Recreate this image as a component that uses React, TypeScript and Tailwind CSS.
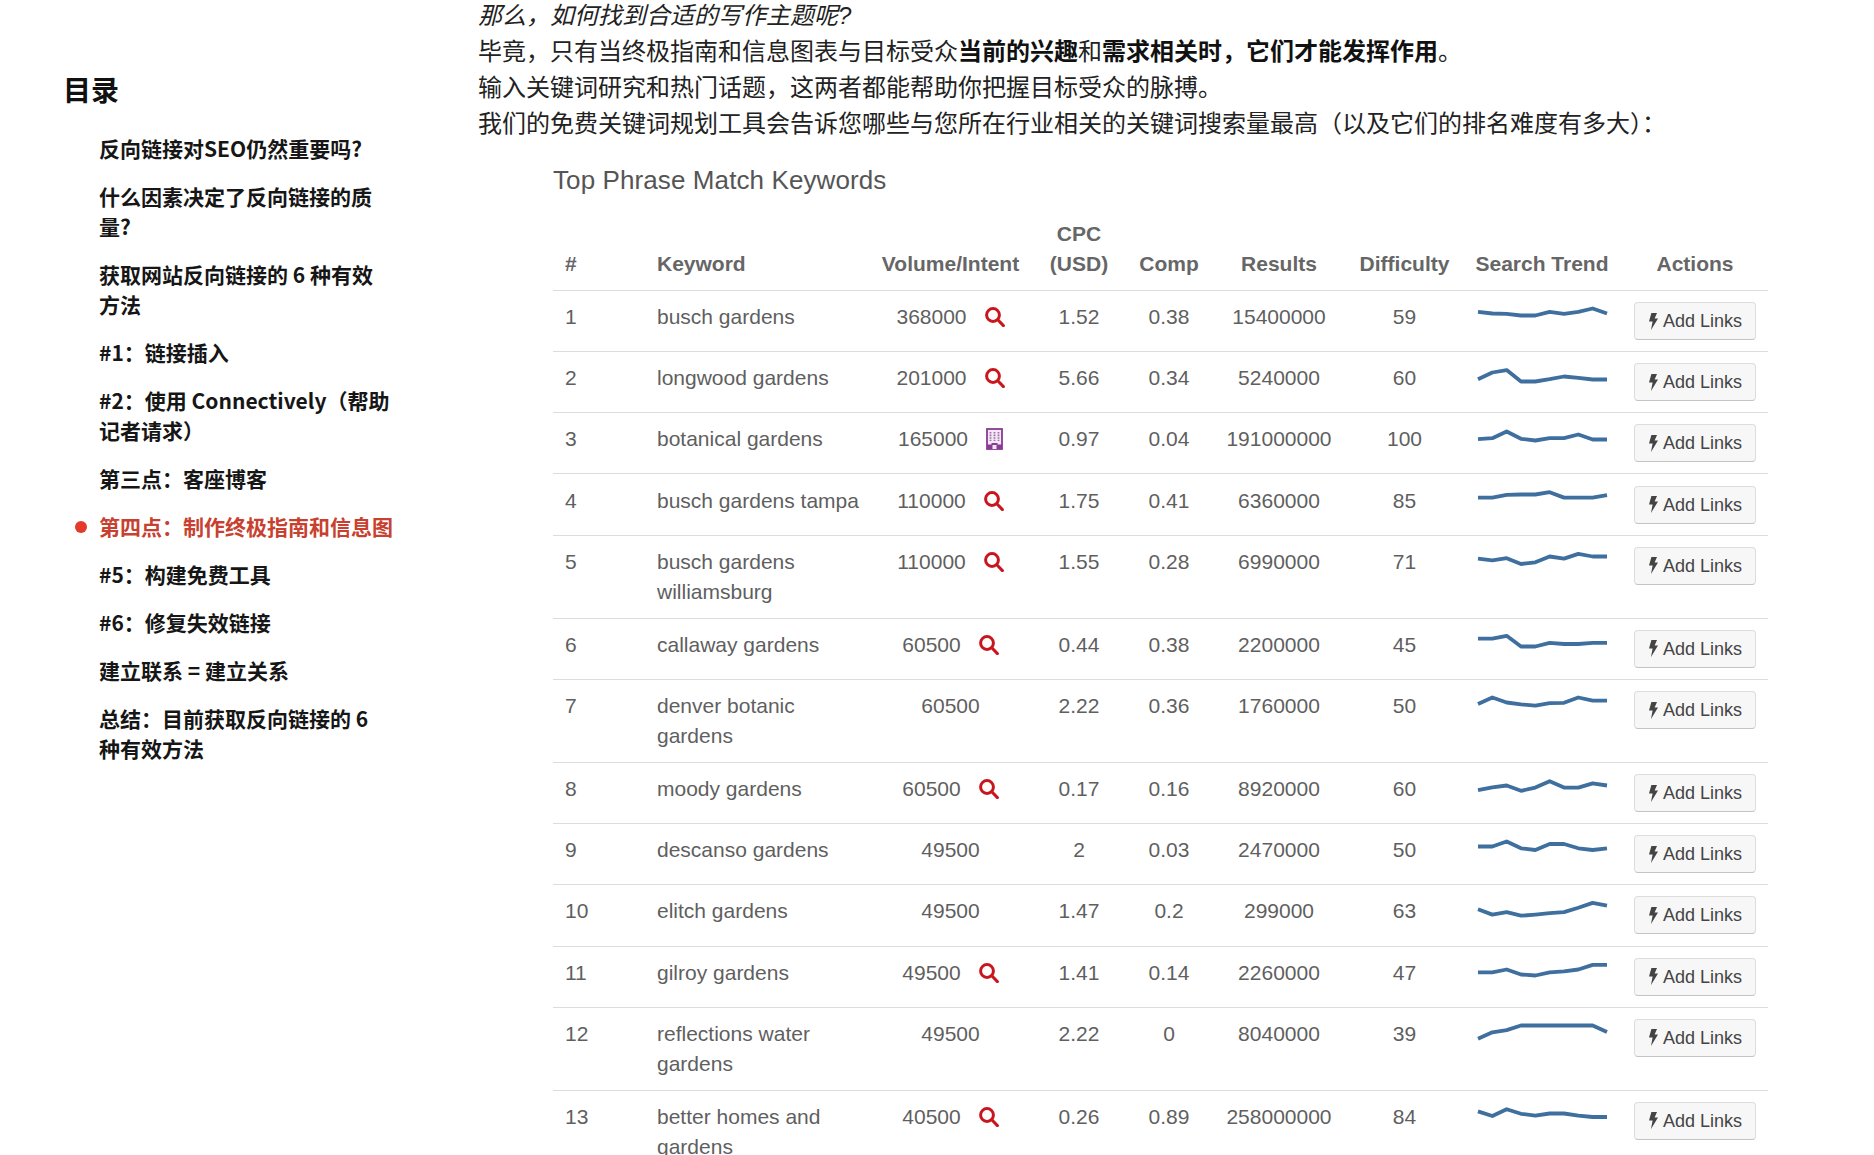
import React from 'react';

const tocItems = [
	'反向链接对SEO仍然重要吗?',
	'什么因素决定了反向链接的质量?',
	'获取网站反向链接的 6 种有效方法',
	'#1：链接插入',
	'#2：使用 Connectively（帮助记者请求）',
	'第三点：客座博客',
	'第四点：制作终极指南和信息图',
	'#5：构建免费工具',
	'#6：修复失效链接',
	'建立联系 = 建立关系',
	'总结：目前获取反向链接的 6 种有效方法',
];

type Intent = 'search' | 'building' | null;

const keywords: {
	keyword: string;
	volume: string;
	intent: Intent;
	cpc: string;
	comp: string;
	results: string;
	difficulty: string;
	trend: number[];
}[] = [
	{ keyword: 'busch gardens', volume: '368000', intent: 'search', cpc: '1.52', comp: '0.38', results: '15400000', difficulty: '59', trend: [9.8, 11.5, 11.8, 13.5, 13.5, 9.8, 11.8, 9.8, 6.5, 11.5] },
	{ keyword: 'longwood gardens', volume: '201000', intent: 'search', cpc: '5.66', comp: '0.34', results: '5240000', difficulty: '60', trend: [16.2, 9.5, 7.1, 18.5, 18.5, 16.2, 13.5, 14.8, 16.5, 16.5] },
	{ keyword: 'botanical gardens', volume: '165000', intent: 'building', cpc: '0.97', comp: '0.04', results: '191000000', difficulty: '100', trend: [15.2, 14.2, 7.5, 14.8, 16.5, 14.2, 14.2, 10.5, 15.5, 15.5] },
	{ keyword: 'busch gardens tampa', volume: '110000', intent: 'search', cpc: '1.75', comp: '0.41', results: '6360000', difficulty: '85', trend: [11.6, 11.6, 8.9, 8.5, 8.5, 6.2, 11.6, 11.6, 11.6, 9.2] },
	{ keyword: 'busch gardens williamsburg', volume: '110000', intent: 'search', cpc: '1.55', comp: '0.28', results: '6990000', difficulty: '71', trend: [11.6, 13.3, 11.2, 17, 15.3, 9.5, 11.6, 6.9, 9.5, 9.5] },
	{ keyword: 'callaway gardens', volume: '60500', intent: 'search', cpc: '0.44', comp: '0.38', results: '2200000', difficulty: '45', trend: [8.6, 8.6, 5.8, 16.5, 16.5, 12.9, 14, 14, 12.9, 12.9] },
	{ keyword: 'denver botanic gardens', volume: '60500', intent: null, cpc: '2.22', comp: '0.36', results: '1760000', difficulty: '50', trend: [12.9, 6.5, 11.5, 13.3, 14.7, 12.2, 11.8, 6.5, 9.7, 9.7] },
	{ keyword: 'moody gardens', volume: '60500', intent: 'search', cpc: '0.17', comp: '0.16', results: '8920000', difficulty: '60', trend: [16.1, 13.3, 11.5, 16.8, 13.6, 7.2, 13.6, 13.6, 9.4, 11.5] },
	{ keyword: 'descanso gardens', volume: '49500', intent: null, cpc: '2', comp: '0.03', results: '2470000', difficulty: '50', trend: [11.5, 11.5, 6.5, 13.3, 15, 9, 9, 13.3, 15, 13.3] },
	{ keyword: 'elitch gardens', volume: '49500', intent: null, cpc: '1.47', comp: '0.2', results: '299000', difficulty: '63', trend: [13.3, 18.6, 16.1, 19.7, 18.6, 17.2, 16.1, 11.8, 6.9, 9.7] },
	{ keyword: 'gilroy gardens', volume: '49500', intent: 'search', cpc: '1.41', comp: '0.14', results: '2260000', difficulty: '47', trend: [14.3, 14.3, 11.5, 16.5, 17.5, 14.3, 13.3, 11.5, 6.9, 6.9] },
	{ keyword: 'reflections water gardens', volume: '49500', intent: null, cpc: '2.22', comp: '0', results: '8040000', difficulty: '39', trend: [19.7, 13.3, 11.1, 6.5, 6.5, 6.5, 6.5, 6.5, 6.5, 12.9] },
	{ keyword: 'better homes and gardens', volume: '40500', intent: 'search', cpc: '0.26', comp: '0.89', results: '258000000', difficulty: '84', trend: [9.4, 14, 7.2, 11.8, 13.6, 11.5, 11.5, 13.6, 15, 15] },
];

function SearchIcon() {
	return (
		<svg width="20" height="20" viewBox="0 0 20 20" fill="none" className="mt-[5px] shrink-0">
			<circle cx="8" cy="8" r="6.4" stroke="#c9161d" strokeWidth="3" />
			<path d="M12.8 12.8 18.4 18.6" stroke="#c9161d" strokeWidth="3" strokeLinecap="round" />
		</svg>
	);
}

function BuildingIcon() {
	return (
		<svg width="17" height="22" viewBox="0 0 17 22" className="mt-[4px] shrink-0">
			<rect x="1" y="1" width="15" height="20" fill="#f3e9f5" stroke="#8a3a94" strokeWidth="1.8" />
			<path d="M4.5 4v9M8.5 4v9M12.5 4v9" stroke="#a66cae" strokeWidth="1.8" strokeDasharray="1.6 1" />
			<path d="M1 16.5h4.5v-1.5h6v1.5H16V21H1z" fill="#8a3a94" />
			<rect x="6.5" y="17" width="4" height="4" fill="#f3e9f5" />
		</svg>
	);
}

function BoltIcon() {
	return (
		<svg width="10" height="17" viewBox="0 0 10 17" className="shrink-0">
			<path d="M3.4 0H9L6.6 5.6H10L3 17l1.6-8.4H1z" fill="#444" />
		</svg>
	);
}

function Sparkline({ points }: { points: number[] }) {
	const line = points.map((y, i) => `${(i * 129) / 9 + 1},${y}`).join(' ');
	return (
		<svg width="131" height="30" viewBox="0 0 131 30" className="block mx-auto">
			<polyline points={line} fill="none" stroke="#3f6f9e" strokeWidth="3.8" strokeLinejoin="round" />
		</svg>
	);
}

export default function App() {
	return (
		<div className="h-[1155px] overflow-hidden bg-white flex font-['Liberation_Sans','Noto_Sans_CJK_SC',sans-serif]">
			<aside className="w-[478px] shrink-0 pl-[63px] pt-[69px] font-['Noto_Sans_CJK_SC',sans-serif]">
				<h2 className="text-[28px] leading-[40px] font-bold text-[#111]">目录</h2>
				<ul className="mt-[24px] ml-[36px] w-[294.5px] flex flex-col gap-[18px]">
					{tocItems.map((item, i) => (
						<li
							key={item}
							className={`relative text-[21px] leading-[30px] font-bold ${i === 6 ? 'text-[#c8402f]' : 'text-[#161616]'}`}
						>
							{i === 6 && <span className="absolute left-[-24px] top-[10px] w-[12px] h-[12px] rounded-full bg-[#e33a2c]" />}
							{item}
						</li>
					))}
				</ul>
			</aside>

			<main className="w-[1290px] -mt-[2px]">
				<div className="text-[24px] leading-[36px] text-[#222]">
					<p className="italic">那么，如何找到合适的写作主题呢?</p>
					<p>
						毕竟，只有当终极指南和信息图表与目标受众<b className="text-[#111]">当前的兴趣</b>和<b className="text-[#111]">需求相关时，它们才能发挥作用</b>。
					</p>
					<p>输入关键词研究和热门话题，这两者都能帮助你把握目标受众的脉搏。</p>
					<p>我们的免费关键词规划工具会告诉您哪些与您所在行业相关的关键词搜索量最高（以及它们的排名难度有多大）：</p>
				</div>

				<div className="ml-[75px] w-[1215px]">
					<h3 className="mt-[20px] text-[26px] leading-[36px] tracking-[0.1px] text-[#555]">Top Phrase Match Keywords</h3>
					<table className="mt-[9px] w-full table-fixed border-collapse text-[21px] leading-[30px] text-[#5f5f5f]">
						<colgroup>
							<col className="w-[91px]" />
							<col className="w-[226px]" />
							<col className="w-[161px]" />
							<col className="w-[96px]" />
							<col className="w-[84px]" />
							<col className="w-[136px]" />
							<col className="w-[115px]" />
							<col className="w-[160px]" />
							<col className="w-[146px]" />
						</colgroup>
						<thead>
							<tr className="align-bottom text-[#666] font-bold">
								<th className="pt-[12px] pb-[11px] px-[12px] text-left">#</th>
								<th className="pt-[12px] pb-[11px] pr-[12px] pl-[13px] text-left">Keyword</th>
								<th className="pt-[12px] pb-[11px] text-center">Volume/Intent</th>
								<th className="pt-[12px] pb-[11px] text-center">
									CPC
									<br />
									(USD)
								</th>
								<th className="pt-[12px] pb-[11px] text-center">Comp</th>
								<th className="pt-[12px] pb-[11px] text-center">Results</th>
								<th className="pt-[12px] pb-[11px] text-center">Difficulty</th>
								<th className="pt-[12px] pb-[11px] text-center">Search Trend</th>
								<th className="pt-[12px] pb-[11px] text-center">Actions</th>
							</tr>
						</thead>
						<tbody>
							{keywords.map((row, i) => (
								<tr key={row.keyword} className="align-top border-t border-[#dcdcdc]">
									<td className="py-[11.08px] pl-[12px]">{i + 1}</td>
									<td className="py-[11.08px] pl-[13px] pr-[11px]">{row.keyword}</td>
									<td className="py-[11.08px]">
										<div className="flex justify-center gap-[18px]">
											<span>{row.volume}</span>
											{row.intent === 'search' && <SearchIcon />}
											{row.intent === 'building' && <BuildingIcon />}
										</div>
									</td>
									<td className="py-[11.08px] text-center">{row.cpc}</td>
									<td className="py-[11.08px] text-center">{row.comp}</td>
									<td className="py-[11.08px] text-center">{row.results}</td>
									<td className="py-[11.08px] text-center">{row.difficulty}</td>
									<td className="py-[11.08px]">
										<Sparkline points={row.trend} />
									</td>
									<td className="py-[11.08px]">
										<button className="mx-auto flex items-center justify-center gap-[5px] w-[122px] h-[38px] rounded-[4px] border border-[#dddddd] border-b-[#c4c4c4] bg-[#f7f7f7] text-[18px] text-[#444]">
											<BoltIcon />
											Add Links
										</button>
									</td>
								</tr>
							))}
						</tbody>
					</table>
				</div>
			</main>
		</div>
	);
}
